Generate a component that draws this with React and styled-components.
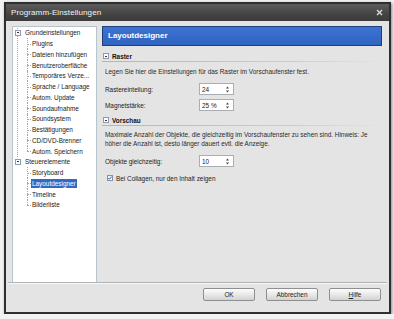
import styled, { createGlobalStyle } from 'styled-components';

const GlobalStyle = createGlobalStyle`
  html, body {
    margin: 0;
    padding: 0;
    background: #f2f2f2;
  }
  body {
    font-family: "Liberation Sans", Arial, sans-serif;
    font-size: 6.4px;
    color: #222;
  }
`;

const Window = styled.div`
  box-sizing: border-box;
  width: 387px;
  height: 312px;
  margin: 2px 0 0 4px;
  border: 2px solid #2f2f2f;
  background: #e4e4e4;
  box-shadow: 1px 1px 3px rgba(0, 0, 0, 0.45);
  display: flex;
  flex-direction: column;
`;

const TitleBar = styled.div`
  height: 17px;
  flex: none;
  display: flex;
  align-items: center;
  justify-content: space-between;
  padding: 0 6px 0 5px;
  background: linear-gradient(#5c5c5c, #444 60%, #3b3b3b);
  color: #f4f4f4;
  font-size: 8px;
  letter-spacing: 0.1px;
`;

const Body = styled.div`
  flex: 1;
  display: flex;
  gap: 5px;
  padding: 5px 7px 0 6px;
  min-height: 0;
`;

const Tree = styled.div`
  box-sizing: border-box;
  width: 85px;
  height: 257px;
  flex: none;
  background: #fff;
  border: 1px solid #b7c3cd;
  padding-top: 0.5px;
`;

const TreeGroup = styled.div`
  background: ${(p) =>
    p.$line
      ? 'linear-gradient(#a6a6a6 50%, transparent 0) 4px 0 / 1px 2px repeat-y'
      : 'none'};
`;

const TreeRow = styled.div`
  height: 10.75px;
  display: flex;
  align-items: center;
  padding-left: ${(p) => (p.$child ? '14px' : '2px')};
  white-space: nowrap;
`;

const Expander = styled.span`
  position: relative;
  box-sizing: border-box;
  width: 6px;
  height: 6px;
  flex: none;
  border: 1px solid #8d9cb0;
  background: #fff;
  margin-right: ${(p) => p.$gap || 4}px;
  &::after {
    content: "";
    position: absolute;
    left: 1px;
    top: 1.5px;
    width: 2px;
    height: 1px;
    background: #333;
  }
`;

const Branch = styled.span`
  position: relative;
  width: 4px;
  align-self: stretch;
  flex: none;
  &::before {
    content: "";
    position: absolute;
    left: 0;
    top: 0;
    height: ${(p) => (p.$last ? '50%' : '100%')};
    border-left: 1px dotted #a6a6a6;
  }
  &::after {
    content: "";
    position: absolute;
    left: 0;
    top: 50%;
    width: 4px;
    border-top: 1px dotted #a6a6a6;
  }
`;

const Label = styled.span`
  padding: 1px 1px;
  line-height: 7px;
  background: ${(p) => (p.$selected ? '#316ac5' : 'transparent')};
  color: ${(p) => (p.$selected ? '#fff' : '#222')};
`;

const Panel = styled.div`
  flex: 1;
  display: flex;
  flex-direction: column;
`;

const Banner = styled.div`
  box-sizing: border-box;
  height: 20px;
  border: 1px solid #1e3e7c;
  background: linear-gradient(#3d73d2, #2f63c0);
  color: #fff;
  font-weight: bold;
  font-size: 8px;
  line-height: 18px;
  padding-left: 5px;
`;

const SectionHead = styled.div`
  height: 10px;
  margin-top: ${(p) => p.$top}px;
  display: flex;
  align-items: center;
  padding-left: 1px;
  font-weight: bold;
  color: #111;
`;

const Rule = styled.div`
  height: 1px;
  background: linear-gradient(to right, #a9b6c8, #c6d0dc 70%, rgba(210, 218, 228, 0));
`;

const Text = styled.p`
  margin: ${(p) => p.$top}px 0 0;
  padding-left: 3px;
  line-height: ${(p) => p.$lh || 9}px;
  white-space: nowrap;
  color: #2a2a2a;
`;

const Field = styled.div`
  display: flex;
  align-items: center;
  height: 12px;
  margin-top: ${(p) => p.$top}px;
  padding-left: 3px;
`;

const FieldLabel = styled.span`
  width: 94px;
  flex: none;
`;

const Spin = styled.div`
  box-sizing: border-box;
  width: 35px;
  height: 12px;
  display: flex;
  align-items: center;
  justify-content: space-between;
  padding: 0 4px 0 2px;
  background: #fff;
  border: 1px solid #a7aeb6;
`;

const CheckRow = styled.label`
  display: flex;
  align-items: center;
  gap: 3px;
  height: 8px;
  margin-top: ${(p) => p.$top}px;
  padding-left: 5px;
`;

const Box = styled.span`
  box-sizing: border-box;
  width: 6px;
  height: 6px;
  border: 1px solid #7f93ad;
  background: linear-gradient(#e8edf3, #fff);
  display: flex;
  align-items: center;
  justify-content: center;
`;

const Footer = styled.div`
  flex: none;
  height: 24px;
  margin: 0 2px;
  border-top: 1px solid #b3b3b3;
  box-shadow: inset 0 1px #f7f7f7;
  display: flex;
  justify-content: flex-end;
  align-items: flex-start;
  gap: 11px;
  padding: 5px 6px 0 0;
`;

const Button = styled.button`
  box-sizing: border-box;
  width: 52px;
  height: 13px;
  padding: 0;
  border: 1px solid #8f8f8f;
  border-radius: 2px;
  background: linear-gradient(#fdfdfd, #e9e9e9 50%, #d2d2d2);
  font-family: inherit;
  font-size: 6.4px;
  color: #222;
  line-height: 11px;
  u {
    text-decoration: underline;
  }
`;

const Close = () => (
  <svg width="7" height="7" viewBox="0 0 7 7">
    <path d="M1 1L6 6M6 1L1 6" stroke="#d8d8d8" strokeWidth="1.4" />
  </svg>
);

const Arrows = () => (
  <svg width="3" height="7" viewBox="0 0 3 7">
    <path d="M1.5 0.5L3 2.5H0Z M0 4.5H3L1.5 6.5Z" fill="#444" />
  </svg>
);

const Tick = () => (
  <svg width="4" height="4" viewBox="0 0 4 4">
    <path d="M0.3 2L1.5 3.3L3.7 0.6" stroke="#3f5f9f" strokeWidth="1" fill="none" />
  </svg>
);

const groups = [
  {
    name: 'Grundeinstellungen',
    items: [
      'Plugins',
      'Dateien hinzufügen',
      'Benutzeroberfläche',
      'Temporäres Verze...',
      'Sprache / Language',
      'Autom. Update',
      'Soundaufnahme',
      'Soundsystem',
      'Bestätigungen',
      'CD/DVD-Brenner',
      'Autom. Speichern',
    ],
  },
  {
    name: 'Steuerelemente',
    items: ['Storyboard', 'Layoutdesigner', 'Timeline', 'Bilderliste'],
  },
];

const App = () => (
  <>
    <GlobalStyle />
    <Window>
      <TitleBar>
        <span>Programm-Einstellungen</span>
        <Close />
      </TitleBar>
      <Body>
        <Tree>
          {groups.map((g, gi) => (
            <TreeGroup key={g.name} $line={gi < groups.length - 1}>
              <TreeRow>
                <Expander />
                <span>{g.name}</span>
              </TreeRow>
              {g.items.map((item, i) => (
                <TreeRow key={item} $child>
                  <Branch $last={i === g.items.length - 1} />
                  <Label $selected={item === 'Layoutdesigner'}>{item}</Label>
                </TreeRow>
              ))}
            </TreeGroup>
          ))}
        </Tree>
        <Panel>
          <Banner>Layoutdesigner</Banner>
          <SectionHead $top={5}>
            <Expander $gap={3} />
            Raster
          </SectionHead>
          <Rule />
          <Text $top={5}>
            Legen Sie hier die Einstellungen für das Raster im Vorschaufenster fest.
          </Text>
          <Field $top={7}>
            <FieldLabel>Rastereinteilung:</FieldLabel>
            <Spin>
              <span>24</span>
              <Arrows />
            </Spin>
          </Field>
          <Field $top={4}>
            <FieldLabel>Magnetstärke:</FieldLabel>
            <Spin>
              <span>25 %</span>
              <Arrows />
            </Spin>
          </Field>
          <SectionHead $top={4}>
            <Expander $gap={3} />
            Vorschau
          </SectionHead>
          <Rule />
          <Text $top={5} $lh={8.5}>
            Maximale Anzahl der Objekte, die gleichzeitig im Vorschaufenster zu sehen sind. Hinweis: Je
            <br />
            höher die Anzahl ist, desto länger dauert evtl. die Anzeige.
          </Text>
          <Field $top={7}>
            <FieldLabel>Objekte gleichzeitig:</FieldLabel>
            <Spin>
              <span>10</span>
              <Arrows />
            </Spin>
          </Field>
          <CheckRow $top={7}>
            <Box>
              <Tick />
            </Box>
            Bei Collagen, nur den Inhalt zeigen
          </CheckRow>
        </Panel>
      </Body>
      <Footer>
        <Button>OK</Button>
        <Button>Abbrechen</Button>
        <Button>
          <u>H</u>ilfe
        </Button>
      </Footer>
    </Window>
  </>
);

export default App;
